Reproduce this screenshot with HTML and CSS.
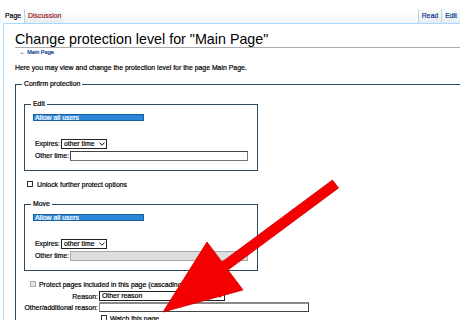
FILE: index.html
```html
<!DOCTYPE html>
<html lang="en">
<head>
    <meta charset="UTF-8">
    <meta name="viewport" content="width=device-width, initial-scale=1.0">
    <title>Change protection level for "Main Page"</title>
    <link rel="stylesheet" href="styles.css">
</head>
<body>

<div class="tabs">
    <div class="tab-group left">
        <span class="tab selected">Page</span>
        <span class="tab new">Discussion</span>
    </div>
    <div class="tab-group">
        <span class="tab">Read</span>
        <span class="tab">Edit</span>
    </div>
</div>

<div class="content">
    <h1 class="first-heading">Change protection level for "Main Page"</h1>
    <div class="sub">← <a href="#">Main Page</a></div>
    <p class="intro">Here you may view and change the protection level for the page Main Page.</p>

    <fieldset class="outer">
        <legend>Confirm protection</legend>

        <fieldset class="inner">
            <legend>Edit</legend>
            <div class="listbox"><div class="option selected">Allow all users</div></div>
            <div class="row">
                <label>Expires:</label>
                <span class="select expiry">other time
                    <svg class="chevron" width="6" height="4" viewBox="0 0 6 4"><polyline points="0.5,0.5 3,3.3 5.5,0.5"/></svg>
                </span>
            </div>
            <div class="row">
                <label>Other time:</label>
                <span class="input time"></span>
            </div>
        </fieldset>

        <div class="check-row unlock"><span class="checkbox"></span>Unlock further protect options</div>

        <fieldset class="inner move">
            <legend>Move</legend>
            <div class="listbox"><div class="option selected">Allow all users</div></div>
            <div class="row">
                <label>Expires:</label>
                <span class="select expiry">other time
                    <svg class="chevron" width="6" height="4" viewBox="0 0 6 4"><polyline points="0.5,0.5 3,3.3 5.5,0.5"/></svg>
                </span>
            </div>
            <div class="row">
                <label>Other time:</label>
                <span class="input time disabled"></span>
            </div>
        </fieldset>

        <div class="check-row cascade"><span class="checkbox disabled"></span>Protect pages included in this page (cascading)</div>

        <div class="reason-grid">
            <label>Reason:</label>
            <span class="select reason">Other reason
                <svg class="chevron" width="6" height="4" viewBox="0 0 6 4"><polyline points="0.5,0.5 3,3.3 5.5,0.5"/></svg>
            </span>
            <label>Other/additional reason:</label>
            <span class="input reason-text"></span>
            <span></span>
            <div class="check-row watch"><span class="checkbox"></span>Watch this page</div>
        </div>
    </fieldset>
</div>

<!-- red arrow drawn over the form -->
<svg class="arrow" width="460" height="320" viewBox="0 0 460 320">
    <polygon points="163,312 207,242 222,262 332.5,180 338.5,188 228,270 243,290"/>
</svg>

</body>
</html>
```

FILE: styles.css
```css
html, body {
    margin: 0;
    overflow: hidden;
    background-color: #fff;
}
body {
    position: relative;
    width: 460px;
    height: 320px;
    font-family: "Liberation Sans", Arial, sans-serif;
    font-size: 6.9px;
    color: #000;
    -webkit-text-stroke: 0.2px;
}
a {
    color: #0b3a8a;
    text-decoration: none;
}

/* tabs */
.tabs {
    display: flex;
    justify-content: space-between;
    align-items: flex-end;
    height: 23px;
    background: linear-gradient(to bottom, #fff 40%, #f3f5f7);
}
.tab-group {
    display: flex;
    align-items: flex-end;
}
.tab-group.left {
    padding-left: 3px;
}
.tab {
    height: 14px;
    line-height: 14px;
    padding: 0 3px;
    color: #0b3a8a;
    background: linear-gradient(to bottom, #fdfdfd, #e6edf3);
    border-left: 1px solid #c6d2dc;
}
.tab.selected {
    color: #000;
    background: #fff;
    border-left: 0;
    padding-left: 2px;
}
.tab.new {
    color: #9c2424;
}

/* content */
.content {
    margin-left: 3px;
    padding-left: 11px;
    border-top: 1px solid #a7d7f9;
    border-left: 1px solid #a7d7f9;
    height: 300px;
}
h1 {
    margin: 7px 0 0;
    font-size: 14.3px;
    font-weight: normal;
    line-height: 16px;
    border-bottom: 1px solid #aaa;
    -webkit-text-stroke: 0;
}
.sub {
    margin: 1px 0 0 5px;
    font-size: 5.6px;
    line-height: 6px;
    color: #0b3a8a;
}
.intro {
    margin: 9px 0 0;
    line-height: 8px;
}

/* fieldsets */
fieldset {
    min-width: 0;
    border: 1px solid #2b4a60;
}
legend {
    margin-left: -2px;
    padding: 0 2px;
    height: 8px;
    line-height: 8px;
}
.outer {
    margin: 8px 0 0;
    padding: 12px 0 0 8px;
    border-right: 0;
    border-bottom: 0;
}
.inner {
    box-sizing: border-box;
    width: 234px;
    margin: 0;
    padding: 6px 0 9px 8px;
}
.inner.move {
    margin-top: 11px;
}
.listbox {
    height: 24px;
}
.option.selected {
    box-sizing: border-box;
    width: 111px;
    height: 7px;
    line-height: 5px;
    padding-left: 1px;
    color: #fff;
    background-color: #2a86d6;
    border: 1px solid #1d5f9e;
}
.row {
    display: flex;
    align-items: center;
    gap: 1px;
    height: 11px;
    padding-left: 2px;
}
.row + .row {
    margin-top: 1px;
}
label {
    white-space: nowrap;
}

/* controls */
.select {
    display: flex;
    align-items: center;
    justify-content: space-between;
    box-sizing: border-box;
    height: 10px;
    padding: 0 1px 0 2px;
    line-height: 8px;
    background-color: #fff;
    border: 1px solid #222;
}
.select.expiry {
    width: 46px;
}
.select.reason {
    width: 126px;
}
.chevron polyline {
    fill: none;
    stroke: #222;
    stroke-width: 1;
}
.input {
    box-sizing: border-box;
    height: 10px;
    background-color: #fff;
    border: 1px solid #777;
    border-top-color: #444;
    border-left-color: #444;
}
.input.time {
    width: 178px;
}
.input.disabled {
    background-color: #dedede;
    border-color: #a8a8a8;
}
.input.reason-text {
    width: 210px;
    border-top: 2px solid #8a8a8a;
    border-left: 1px solid #8a8a8a;
    border-right: 1px solid #444;
    border-bottom: 1px solid #444;
}
.check-row {
    display: flex;
    align-items: center;
    height: 10px;
}
.checkbox {
    box-sizing: border-box;
    width: 6px;
    height: 6px;
    background-color: #fff;
    border: 1px solid #333;
}
.checkbox.disabled {
    background-color: #e6e6e6;
    border-color: #aaa;
}
.unlock {
    margin-top: 8px;
    gap: 4px;
}
.unlock .checkbox {
    margin-left: 3px;
}
.cascade {
    margin-top: 8px;
    gap: 3px;
}
.cascade .checkbox {
    margin-left: 6px;
}
.reason-grid {
    display: grid;
    grid-template-columns: 74px auto;
    grid-auto-rows: 10px;
    column-gap: 1px;
    row-gap: 1px;
    align-items: center;
    justify-items: start;
    margin-top: 2px;
}
.reason-grid label {
    justify-self: end;
}
.watch {
    gap: 3px;
}
.watch .checkbox {
    margin-left: 2px;
}

/* arrow overlay */
.arrow {
    position: absolute;
    top: 0;
    left: 0;
    pointer-events: none;
}
.arrow polygon {
    fill: #f40000;
    stroke: #d40000;
    stroke-width: 0.8;
}
```
